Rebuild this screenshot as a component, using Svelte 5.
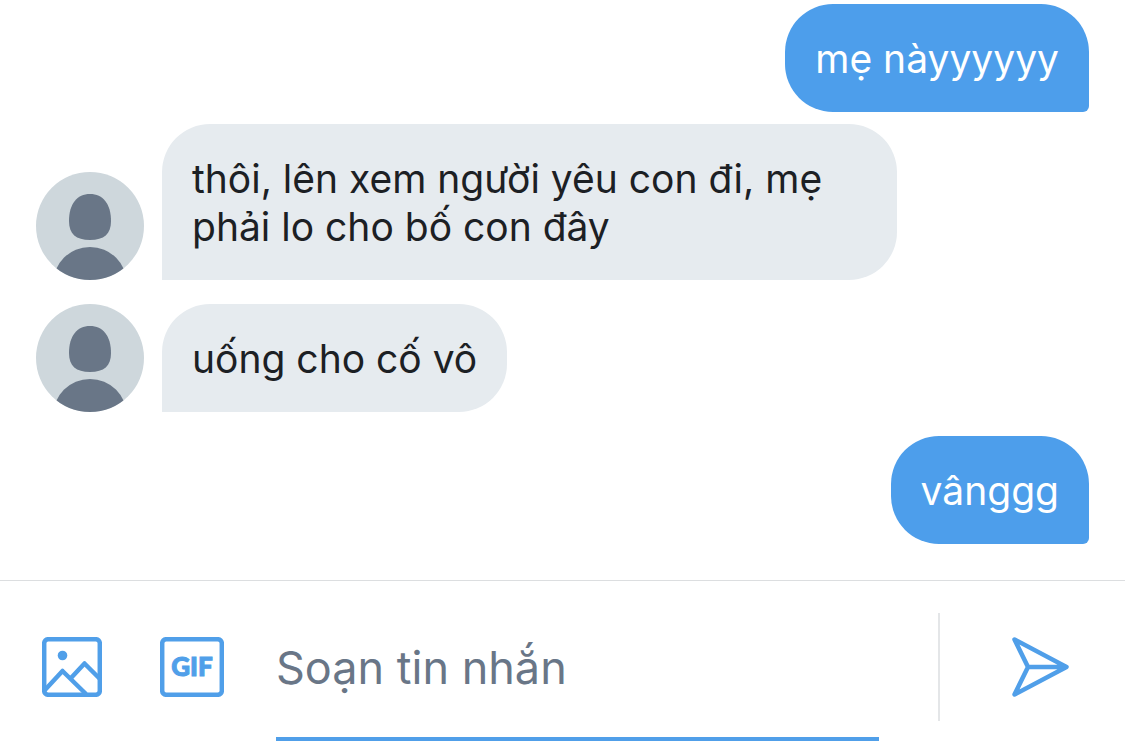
<script>
    let draft = $state('');

    const messages = [
        { id: 1, mine: true, text: 'mẹ nàyyyyyy' },
        { id: 2, mine: false, text: 'thôi, lên xem người yêu con đi, mẹ phải lo cho bố con đây' },
        { id: 3, mine: false, text: 'uống cho cố vô' },
        { id: 4, mine: true, text: 'vânggg' }
    ];

    function send(event) {
        event.preventDefault();
        draft = '';
    }
</script>

<main class="chat">
    <!-- Messages -->
    <div class="messages">
        {#each messages as m (m.id)}
            <div class="message" class:mine={m.mine}>
                {#if !m.mine}
                    <svg class="avatar" viewBox="0 0 108 108" aria-hidden="true">
                        <clipPath id="face-{m.id}"><circle cx="54" cy="54" r="54" /></clipPath>
                        <g clip-path="url(#face-{m.id})">
                            <rect width="108" height="108" fill="#ced7dc" />
                            <path
                                d="M54 22C67 22 75 32 75 49C75 62 68 68 54 68C40 68 33 62 33 49C33 32 41 22 54 22Z"
                                fill="#697687"
                            />
                            <circle cx="54" cy="112" r="37" fill="#697687" />
                        </g>
                    </svg>
                {/if}
                <p class="bubble">{m.text}</p>
            </div>
        {/each}
    </div>

    <!-- Composer -->
    <form class="composer" onsubmit={send}>
        <button type="button" class="tool" aria-label="Ảnh">
            <svg width="60" height="60" viewBox="0 0 60 60" fill="none" stroke="currentColor" stroke-width="4.5">
                <rect x="2.2" y="2.2" width="55.6" height="55.6" rx="4" />
                <circle cx="20.500" cy="18.500" r="4.800" fill="currentColor" stroke="none" />
                <path d="M2 54L20.500 34L44 57M29 41L42.500 26.500L58 42" stroke-linejoin="round" />
            </svg>
        </button>
        <button type="button" class="tool" aria-label="GIF">
            <svg width="64" height="60" viewBox="0 0 64 60">
                <rect x="2.2" y="2.2" width="59.6" height="55.6" rx="4" fill="none" stroke="currentColor" stroke-width="4.5" />
                <text x="32" y="39" text-anchor="middle" class="gif">GIF</text>
            </svg>
        </button>
        <input type="text" bind:value={draft} placeholder="Soạn tin nhắn" aria-label="Soạn tin nhắn" />
        <div class="divider"></div>
        <button type="submit" class="send" aria-label="Gửi">
            <svg width="58" height="60" viewBox="0 0 58 60" fill="none" stroke="currentColor" stroke-width="4.5" stroke-linejoin="round" stroke-linecap="round">
                <path d="M2.500 2.500L54.500 30L2.500 57.500L16 30ZM16 30H54" />
            </svg>
        </button>
    </form>
</main>

<style>
    :global(body) {
        margin: 0;
        background: #fff;
    }

    .chat {
        font-family: Inter, 'Noto Sans', sans-serif;
        color: #1c2024;
    }

    /* Messages */
    .messages {
        display: flex;
        flex-direction: column;
        gap: 24px;
        padding: 4px 36px 36px;
    }

    .message {
        display: flex;
        align-items: flex-end;
        gap: 18px;
    }

    .message.mine { justify-content: flex-end; }
    .message.mine + .message { margin-top: -12px; }

    .avatar {
        flex: none;
        width: 108px;
        height: 108px;
    }

    .bubble {
        box-sizing: border-box;
        max-width: 735px;
        margin: 0;
        padding: 31px 30px 29px;
        border-radius: 48px 48px 48px 0;
        background: #e6ebef;
        font-size: 39px;
        line-height: 48px;
    }

    .mine .bubble {
        border-radius: 48px 48px 6px 48px;
        background: #4d9eeb;
        color: #fff;
    }

    /* Composer */
    .composer {
        display: flex;
        align-items: center;
        padding: 12px 55px 14px 42px;
        border-top: 1px solid #dcdee0;
    }

    button {
        flex: none;
        padding: 0;
        border: 0;
        background: none;
        color: #509fe9;
        cursor: pointer;
    }

    button svg { display: block; }

    .tool { margin-right: 58px; }
    .tool + .tool { margin-right: 52px; }

    .gif {
        font-family: Lato, sans-serif;
        font-size: 26px;
        font-weight: 900;
        fill: currentColor;
        stroke: currentColor;
        stroke-width: 1px;
    }

    input {
        box-sizing: border-box;
        flex: 1;
        min-width: 0;
        height: 148px;
        padding: 4px 0 0;
        border: 0;
        border-bottom: 4px solid #509fe9;
        outline: none;
        background: none;
        color: inherit;
        font-family: inherit;
        font-size: 45px;
    }

    input::placeholder {
        color: #697687;
        opacity: 1;
    }

    .divider {
        width: 2px;
        height: 108px;
        margin: 0 72px 0 59px;
        background: #e4e6e8;
    }
</style>
